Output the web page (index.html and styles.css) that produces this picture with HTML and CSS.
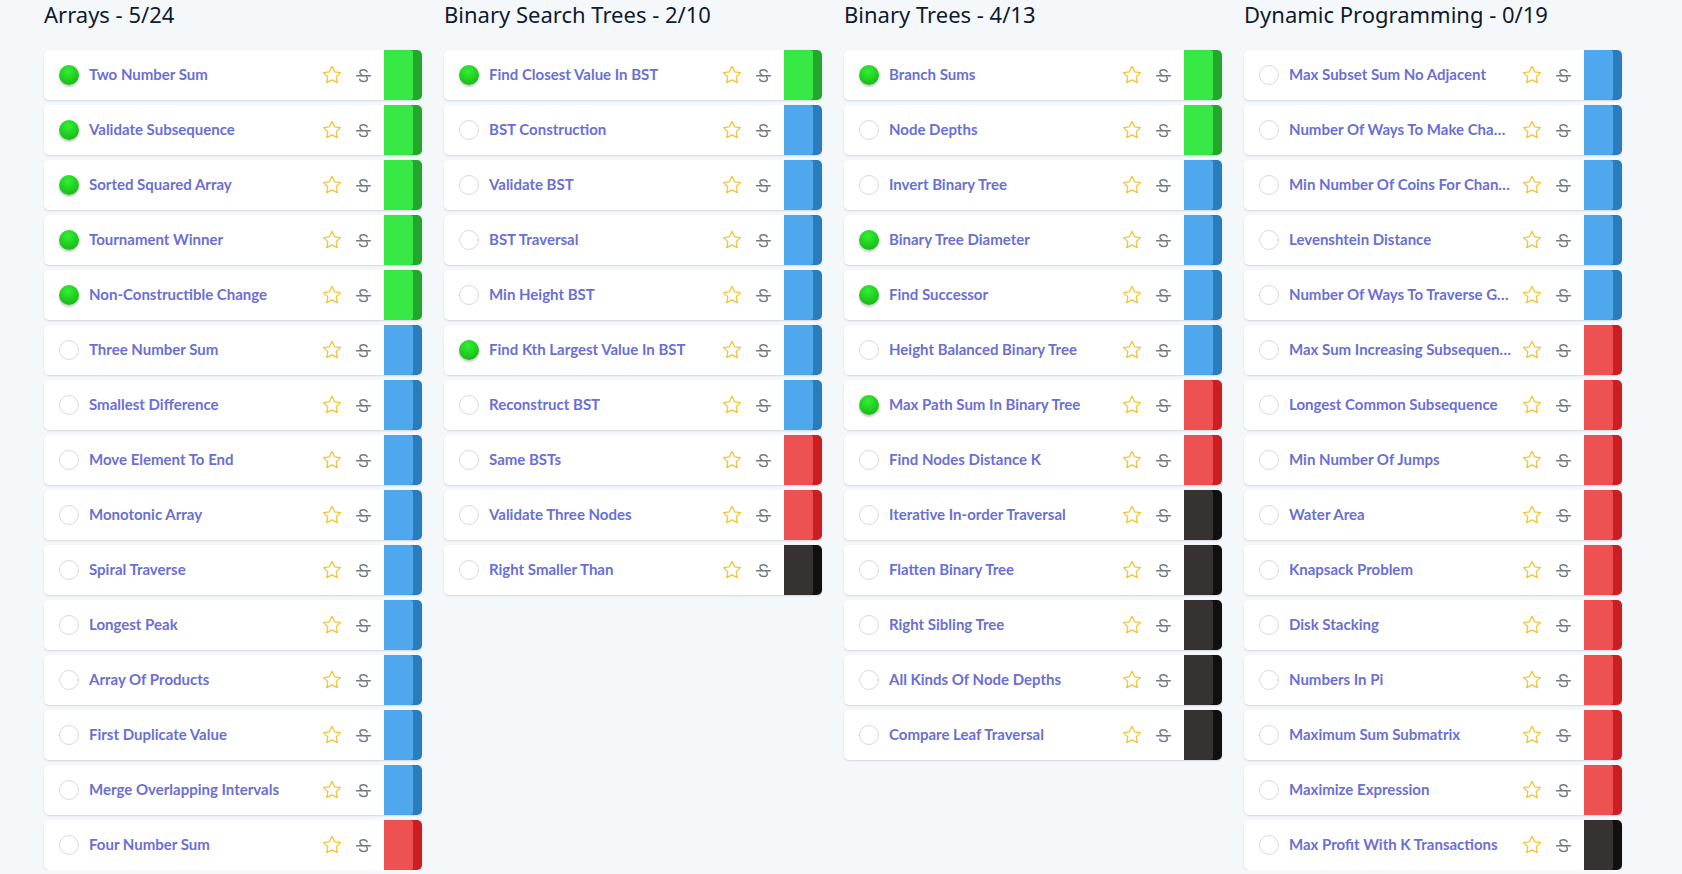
FILE: index.html
```html
<!DOCTYPE html>
<html lang="en">
<head>
<meta charset="utf-8">
<title>Questions</title>
<link rel="stylesheet" href="styles.css">
</head>
<body>
<svg width="0" height="0" class="defs" aria-hidden="true">
  <defs>
    <symbol id="star" viewBox="0 0 24 24">
      <path d="M12 2.6l2.85 5.9 6.45.9-4.7 4.5 1.15 6.4L12 17.25 6.25 20.3 7.4 13.9 2.7 9.4l6.45-.9z" fill="none" stroke="#f2c33b" stroke-width="1.4" stroke-linejoin="round"/>
    </symbol>
    <symbol id="strike" viewBox="0 0 16 16">
      <g fill="none" stroke="#737885" stroke-width="1.4" stroke-linecap="round">
        <path d="M11.4 4.6C11 3.3 9.8 2.6 8 2.6 5.9 2.6 4.6 3.6 4.6 5 4.6 6 5.2 6.8 6.2 7.3"/>
        <path d="M10.7 9.2c.6.5.9 1.1.9 1.8 0 1.5-1.4 2.6-3.6 2.6-1.9 0-3.2-.7-3.6-2"/>
        <path d="M1.5 8.2h13"/>
      </g>
    </symbol>
  </defs>
</svg>
<main class="board">
  <section class="column">
    <h2 class="col-title">Arrays - 5/24</h2>
    <div class="list">
      <div class="card"><span class="check done"></span><span class="name">Two Number Sum</span><svg class="star"><use href="#star"/></svg><svg class="strike"><use href="#strike"/></svg><span class="bar green"></span></div>
      <div class="card"><span class="check done"></span><span class="name">Validate Subsequence</span><svg class="star"><use href="#star"/></svg><svg class="strike"><use href="#strike"/></svg><span class="bar green"></span></div>
      <div class="card"><span class="check done"></span><span class="name">Sorted Squared Array</span><svg class="star"><use href="#star"/></svg><svg class="strike"><use href="#strike"/></svg><span class="bar green"></span></div>
      <div class="card"><span class="check done"></span><span class="name">Tournament Winner</span><svg class="star"><use href="#star"/></svg><svg class="strike"><use href="#strike"/></svg><span class="bar green"></span></div>
      <div class="card"><span class="check done"></span><span class="name">Non-Constructible Change</span><svg class="star"><use href="#star"/></svg><svg class="strike"><use href="#strike"/></svg><span class="bar green"></span></div>
      <div class="card"><span class="check"></span><span class="name">Three Number Sum</span><svg class="star"><use href="#star"/></svg><svg class="strike"><use href="#strike"/></svg><span class="bar blue"></span></div>
      <div class="card"><span class="check"></span><span class="name">Smallest Difference</span><svg class="star"><use href="#star"/></svg><svg class="strike"><use href="#strike"/></svg><span class="bar blue"></span></div>
      <div class="card"><span class="check"></span><span class="name">Move Element To End</span><svg class="star"><use href="#star"/></svg><svg class="strike"><use href="#strike"/></svg><span class="bar blue"></span></div>
      <div class="card"><span class="check"></span><span class="name">Monotonic Array</span><svg class="star"><use href="#star"/></svg><svg class="strike"><use href="#strike"/></svg><span class="bar blue"></span></div>
      <div class="card"><span class="check"></span><span class="name">Spiral Traverse</span><svg class="star"><use href="#star"/></svg><svg class="strike"><use href="#strike"/></svg><span class="bar blue"></span></div>
      <div class="card"><span class="check"></span><span class="name">Longest Peak</span><svg class="star"><use href="#star"/></svg><svg class="strike"><use href="#strike"/></svg><span class="bar blue"></span></div>
      <div class="card"><span class="check"></span><span class="name">Array Of Products</span><svg class="star"><use href="#star"/></svg><svg class="strike"><use href="#strike"/></svg><span class="bar blue"></span></div>
      <div class="card"><span class="check"></span><span class="name">First Duplicate Value</span><svg class="star"><use href="#star"/></svg><svg class="strike"><use href="#strike"/></svg><span class="bar blue"></span></div>
      <div class="card"><span class="check"></span><span class="name">Merge Overlapping Intervals</span><svg class="star"><use href="#star"/></svg><svg class="strike"><use href="#strike"/></svg><span class="bar blue"></span></div>
      <div class="card"><span class="check"></span><span class="name">Four Number Sum</span><svg class="star"><use href="#star"/></svg><svg class="strike"><use href="#strike"/></svg><span class="bar red"></span></div>
    </div>
  </section>
  <section class="column">
    <h2 class="col-title">Binary Search Trees - 2/10</h2>
    <div class="list">
      <div class="card"><span class="check done"></span><span class="name">Find Closest Value In BST</span><svg class="star"><use href="#star"/></svg><svg class="strike"><use href="#strike"/></svg><span class="bar green"></span></div>
      <div class="card"><span class="check"></span><span class="name">BST Construction</span><svg class="star"><use href="#star"/></svg><svg class="strike"><use href="#strike"/></svg><span class="bar blue"></span></div>
      <div class="card"><span class="check"></span><span class="name">Validate BST</span><svg class="star"><use href="#star"/></svg><svg class="strike"><use href="#strike"/></svg><span class="bar blue"></span></div>
      <div class="card"><span class="check"></span><span class="name">BST Traversal</span><svg class="star"><use href="#star"/></svg><svg class="strike"><use href="#strike"/></svg><span class="bar blue"></span></div>
      <div class="card"><span class="check"></span><span class="name">Min Height BST</span><svg class="star"><use href="#star"/></svg><svg class="strike"><use href="#strike"/></svg><span class="bar blue"></span></div>
      <div class="card"><span class="check done"></span><span class="name">Find Kth Largest Value In BST</span><svg class="star"><use href="#star"/></svg><svg class="strike"><use href="#strike"/></svg><span class="bar blue"></span></div>
      <div class="card"><span class="check"></span><span class="name">Reconstruct BST</span><svg class="star"><use href="#star"/></svg><svg class="strike"><use href="#strike"/></svg><span class="bar blue"></span></div>
      <div class="card"><span class="check"></span><span class="name">Same BSTs</span><svg class="star"><use href="#star"/></svg><svg class="strike"><use href="#strike"/></svg><span class="bar red"></span></div>
      <div class="card"><span class="check"></span><span class="name">Validate Three Nodes</span><svg class="star"><use href="#star"/></svg><svg class="strike"><use href="#strike"/></svg><span class="bar red"></span></div>
      <div class="card"><span class="check"></span><span class="name">Right Smaller Than</span><svg class="star"><use href="#star"/></svg><svg class="strike"><use href="#strike"/></svg><span class="bar black"></span></div>
    </div>
  </section>
  <section class="column">
    <h2 class="col-title">Binary Trees - 4/13</h2>
    <div class="list">
      <div class="card"><span class="check done"></span><span class="name">Branch Sums</span><svg class="star"><use href="#star"/></svg><svg class="strike"><use href="#strike"/></svg><span class="bar green"></span></div>
      <div class="card"><span class="check"></span><span class="name">Node Depths</span><svg class="star"><use href="#star"/></svg><svg class="strike"><use href="#strike"/></svg><span class="bar green"></span></div>
      <div class="card"><span class="check"></span><span class="name">Invert Binary Tree</span><svg class="star"><use href="#star"/></svg><svg class="strike"><use href="#strike"/></svg><span class="bar blue"></span></div>
      <div class="card"><span class="check done"></span><span class="name">Binary Tree Diameter</span><svg class="star"><use href="#star"/></svg><svg class="strike"><use href="#strike"/></svg><span class="bar blue"></span></div>
      <div class="card"><span class="check done"></span><span class="name">Find Successor</span><svg class="star"><use href="#star"/></svg><svg class="strike"><use href="#strike"/></svg><span class="bar blue"></span></div>
      <div class="card"><span class="check"></span><span class="name">Height Balanced Binary Tree</span><svg class="star"><use href="#star"/></svg><svg class="strike"><use href="#strike"/></svg><span class="bar blue"></span></div>
      <div class="card"><span class="check done"></span><span class="name">Max Path Sum In Binary Tree</span><svg class="star"><use href="#star"/></svg><svg class="strike"><use href="#strike"/></svg><span class="bar red"></span></div>
      <div class="card"><span class="check"></span><span class="name">Find Nodes Distance K</span><svg class="star"><use href="#star"/></svg><svg class="strike"><use href="#strike"/></svg><span class="bar red"></span></div>
      <div class="card"><span class="check"></span><span class="name">Iterative In-order Traversal</span><svg class="star"><use href="#star"/></svg><svg class="strike"><use href="#strike"/></svg><span class="bar black"></span></div>
      <div class="card"><span class="check"></span><span class="name">Flatten Binary Tree</span><svg class="star"><use href="#star"/></svg><svg class="strike"><use href="#strike"/></svg><span class="bar black"></span></div>
      <div class="card"><span class="check"></span><span class="name">Right Sibling Tree</span><svg class="star"><use href="#star"/></svg><svg class="strike"><use href="#strike"/></svg><span class="bar black"></span></div>
      <div class="card"><span class="check"></span><span class="name">All Kinds Of Node Depths</span><svg class="star"><use href="#star"/></svg><svg class="strike"><use href="#strike"/></svg><span class="bar black"></span></div>
      <div class="card"><span class="check"></span><span class="name">Compare Leaf Traversal</span><svg class="star"><use href="#star"/></svg><svg class="strike"><use href="#strike"/></svg><span class="bar black"></span></div>
    </div>
  </section>
  <section class="column">
    <h2 class="col-title">Dynamic Programming - 0/19</h2>
    <div class="list">
      <div class="card"><span class="check"></span><span class="name">Max Subset Sum No Adjacent</span><svg class="star"><use href="#star"/></svg><svg class="strike"><use href="#strike"/></svg><span class="bar blue"></span></div>
      <div class="card"><span class="check"></span><span class="name">Number Of Ways To Make Change</span><svg class="star"><use href="#star"/></svg><svg class="strike"><use href="#strike"/></svg><span class="bar blue"></span></div>
      <div class="card"><span class="check"></span><span class="name">Min Number Of Coins For Change</span><svg class="star"><use href="#star"/></svg><svg class="strike"><use href="#strike"/></svg><span class="bar blue"></span></div>
      <div class="card"><span class="check"></span><span class="name">Levenshtein Distance</span><svg class="star"><use href="#star"/></svg><svg class="strike"><use href="#strike"/></svg><span class="bar blue"></span></div>
      <div class="card"><span class="check"></span><span class="name">Number Of Ways To Traverse Graph</span><svg class="star"><use href="#star"/></svg><svg class="strike"><use href="#strike"/></svg><span class="bar blue"></span></div>
      <div class="card"><span class="check"></span><span class="name">Max Sum Increasing Subsequence</span><svg class="star"><use href="#star"/></svg><svg class="strike"><use href="#strike"/></svg><span class="bar red"></span></div>
      <div class="card"><span class="check"></span><span class="name">Longest Common Subsequence</span><svg class="star"><use href="#star"/></svg><svg class="strike"><use href="#strike"/></svg><span class="bar red"></span></div>
      <div class="card"><span class="check"></span><span class="name">Min Number Of Jumps</span><svg class="star"><use href="#star"/></svg><svg class="strike"><use href="#strike"/></svg><span class="bar red"></span></div>
      <div class="card"><span class="check"></span><span class="name">Water Area</span><svg class="star"><use href="#star"/></svg><svg class="strike"><use href="#strike"/></svg><span class="bar red"></span></div>
      <div class="card"><span class="check"></span><span class="name">Knapsack Problem</span><svg class="star"><use href="#star"/></svg><svg class="strike"><use href="#strike"/></svg><span class="bar red"></span></div>
      <div class="card"><span class="check"></span><span class="name">Disk Stacking</span><svg class="star"><use href="#star"/></svg><svg class="strike"><use href="#strike"/></svg><span class="bar red"></span></div>
      <div class="card"><span class="check"></span><span class="name">Numbers In Pi</span><svg class="star"><use href="#star"/></svg><svg class="strike"><use href="#strike"/></svg><span class="bar red"></span></div>
      <div class="card"><span class="check"></span><span class="name">Maximum Sum Submatrix</span><svg class="star"><use href="#star"/></svg><svg class="strike"><use href="#strike"/></svg><span class="bar red"></span></div>
      <div class="card"><span class="check"></span><span class="name">Maximize Expression</span><svg class="star"><use href="#star"/></svg><svg class="strike"><use href="#strike"/></svg><span class="bar red"></span></div>
      <div class="card"><span class="check"></span><span class="name">Max Profit With K Transactions</span><svg class="star"><use href="#star"/></svg><svg class="strike"><use href="#strike"/></svg><span class="bar black"></span></div>
    </div>
  </section>
</main>
</body>
</html>
```

FILE: styles.css
```css
html, body {
  margin: 0;
  padding: 0;
  background: #f5f8fb;
  overflow: hidden;
}

.defs {
  position: absolute;
  width: 0;
  height: 0;
}

.board {
  display: flex;
  gap: 22px;
  padding-left: 44px;
  align-items: flex-start;
}

.column {
  width: 378px;
  flex: none;
}

.col-title {
  margin: 0 0 22px 0;
  height: 28px;
  font-family: "Noto Sans", "Open Sans", sans-serif;
  font-weight: 400;
  font-size: 22px;
  line-height: 28px;
  color: #0e1a2e;
  letter-spacing: 0;
}

.list {
  display: flex;
  flex-direction: column;
  gap: 5px;
}

.card {
  display: flex;
  align-items: center;
  height: 50px;
  background: #fff;
  border-radius: 5px;
  box-shadow: 0 1px 2px rgba(30, 40, 70, 0.16);
}

.check {
  flex: none;
  width: 20px;
  height: 20px;
  margin-left: 15px;
  border-radius: 50%;
  box-sizing: border-box;
  border: 1px solid #d6d9e4;
  background: #fff;
}

.check.done {
  border: none;
  background: radial-gradient(circle at 45% 30%, #34ef34 0%, #22d222 45%, #16a516 100%);
  box-shadow: 0 2px 2px rgba(0, 0, 0, 0.22);
}

.name {
  flex: 1;
  min-width: 0;
  margin-left: 10px;
  padding-bottom: 2px;
  font-family: Lato, "Open Sans", sans-serif;
  font-weight: 700;
  font-size: 15px;
  color: #6a6fd6;
  white-space: nowrap;
  overflow: hidden;
  text-overflow: ellipsis;
}

.star {
  flex: none;
  width: 22px;
  height: 22px;
  margin-left: 9px;
}

.strike {
  flex: none;
  width: 17px;
  height: 17px;
  margin-left: 12px;
}

.bar {
  flex: none;
  align-self: stretch;
  width: 38px;
  margin-left: 12px;
  border-radius: 0 5px 5px 0;
}

.bar::before {
  content: "";
  display: block;
  width: 29px;
  height: 100%;
  border-radius: 0 3px 3px 0;
}

.bar.green { background: #22a62c; }
.bar.green::before { background: #37e845; }
.bar.blue { background: #2a7cbd; }
.bar.blue::before { background: #4fa8ee; }
.bar.red { background: #c91f22; }
.bar.red::before { background: #ee5152; }
.bar.black { background: #111010; }
.bar.black::before { background: #363232; }
```
